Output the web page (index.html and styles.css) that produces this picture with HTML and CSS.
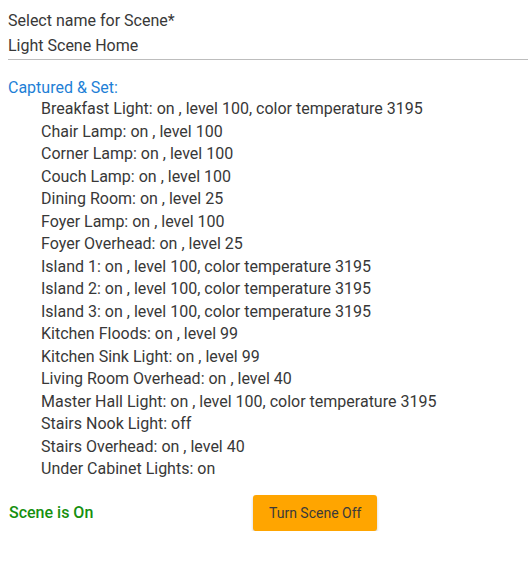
FILE: index.html
```html
<!DOCTYPE html>
<html lang="en">

<head>
    <meta charset="UTF-8">
    <meta name="viewport" content="width=device-width, initial-scale=1.0">
    <title>Scene</title>
    <link rel="stylesheet" href="styles.css">
</head>

<body>
    <div class="scene-field">
        <label class="field-label">Select name for Scene*</label>
        <div class="field-input">Light Scene Home</div>
    </div>

    <div class="captured-title">Captured &amp; Set:</div>
    <ul class="device-list">
        <li>Breakfast Light: on , level 100, color temperature 3195</li>
        <li>Chair Lamp: on , level 100</li>
        <li>Corner Lamp: on , level 100</li>
        <li>Couch Lamp: on , level 100</li>
        <li>Dining Room: on , level 25</li>
        <li>Foyer Lamp: on , level 100</li>
        <li>Foyer Overhead: on , level 25</li>
        <li>Island 1: on , level 100, color temperature 3195</li>
        <li>Island 2: on , level 100, color temperature 3195</li>
        <li>Island 3: on , level 100, color temperature 3195</li>
        <li>Kitchen Floods: on , level 99</li>
        <li>Kitchen Sink Light: on , level 99</li>
        <li>Living Room Overhead: on , level 40</li>
        <li>Master Hall Light: on , level 100, color temperature 3195</li>
        <li>Stairs Nook Light: off</li>
        <li>Stairs Overhead: on , level 40</li>
        <li>Under Cabinet Lights: on</li>
    </ul>

    <div class="scene-status">
        <span class="status-text">Scene is On</span>
        <button class="scene-button">Turn Scene Off</button>
    </div>
</body>

</html>
```

FILE: styles.css
```css
* {
    font-family: Roboto, "Liberation Sans", sans-serif;
    box-sizing: border-box;
}

body {
    margin: 8px 0 0 8px;
    color: #383838;
    font-size: 16px;
    background-color: #ffffff;
}

.scene-field {
    display: flex;
    flex-direction: column;
    border-bottom: 1px solid #bdbdbd;
    padding-bottom: 1px;
}

.field-label {
    line-height: 25px;
}

.field-input {
    line-height: 25px;
}

.captured-title {
    margin-top: 17px;
    color: #1e7fd6;
    line-height: 21px;
}

.device-list {
    list-style: none;
    margin: 0;
    padding: 0 0 0 33px;
}

.device-list li {
    line-height: 22.5px;
}

.scene-status {
    display: flex;
    align-items: center;
    margin-top: 14px;
}

.status-text {
    width: 245px;
    padding-left: 1px;
    color: #16900f;
    font-weight: 500;
}

.scene-button {
    height: 36px;
    padding: 0 16px;
    border: none;
    border-radius: 3px;
    background-color: #ffa500;
    color: #3a3a3a;
    font-size: 14px;
    box-shadow: 0 2px 3px rgba(0, 0, 0, 0.2);
}
```
